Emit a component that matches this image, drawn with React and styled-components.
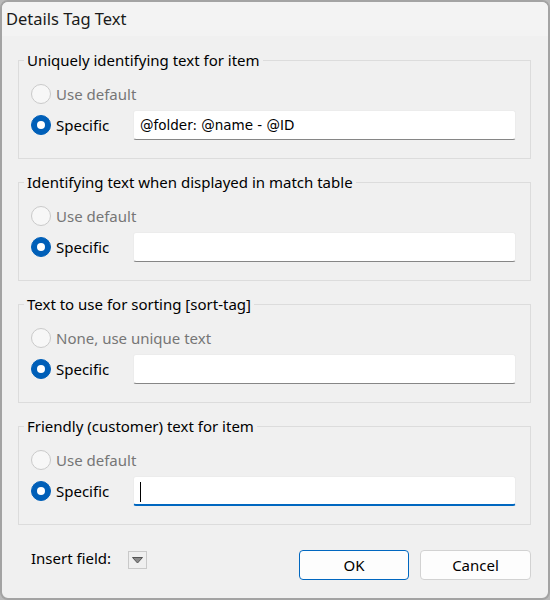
import React from "react";
import styled, { createGlobalStyle } from "styled-components";

const Global = createGlobalStyle`
  html, body { margin: 0; padding: 0; background: #b9b9b9; }
  body { width: 550px; height: 600px; overflow: hidden; }
  * { box-sizing: border-box; }
`;

const Window = styled.div`
  width: 550px;
  height: 600px;
  border: 2px solid #a3a3a3;
  border-radius: 8px;
  background: #f0f0f0;
  overflow: hidden;
  display: flex;
  flex-direction: column;
  font-family: "Noto Sans", "Open Sans", sans-serif;
  color: #000;
`;

const TitleBar = styled.div`
  height: 34px;
  flex: none;
  background: #f3f3f3;
  display: flex;
  align-items: center;
  padding: 0 0 2px 4px;
  font-size: 16.5px;
  color: #1a1a1a;
`;

const Body = styled.div`
  flex: 1;
  display: flex;
  flex-direction: column;
  gap: 14px;
  padding: 15px 17px 0 16px;
`;

const Group = styled.fieldset`
  margin: 0;
  border: 1px solid #dcdcdc;
  padding: 0 14px 18px 12px;
  min-width: 0;
`;

const Legend = styled.legend`
  font-size: 15px;
  line-height: 18px;
  padding: 0 3px;
  margin-left: -7px;
  color: #000;
`;

const Rows = styled.div`
  display: flex;
  flex-direction: column;
  gap: 4px;
  padding-top: 13px;
`;

const Row = styled.div`
  display: flex;
  align-items: center;
  height: ${(p) => (p.$tall ? 30 : 24)}px;
`;

const Choice = styled.div`
  display: flex;
  align-items: center;
  gap: 5px;
  width: ${(p) => (p.$fixed ? "102px" : "auto")};
  flex: none;
  font-size: 15px;
  color: ${(p) => (p.$disabled ? "#767676" : "#000")};
`;

const Radio = styled.span`
  width: 20px;
  height: 20px;
  border-radius: 50%;
  flex: none;
  display: flex;
  align-items: center;
  justify-content: center;
  background: ${(p) => (p.$checked ? "#005fb8" : "#f7f7f7")};
  border: 1px solid ${(p) => (p.$checked ? "#005fb8" : "#cacaca")};
  &::after {
    content: "";
    display: ${(p) => (p.$checked ? "block" : "none")};
    width: 8px;
    height: 8px;
    border-radius: 50%;
    background: #fff;
  }
`;

const Field = styled.div`
  flex: 1;
  height: 30px;
  background: #fff;
  border: 1px solid #ececec;
  border-bottom: ${(p) => (p.$focused ? "2px solid #0067c0" : "1px solid #868686")};
  border-radius: 3px;
  display: flex;
  align-items: center;
  padding: 0 0 0 6px;
  font-family: "DejaVu Sans", sans-serif;
  font-size: 13.5px;
  color: #000;
  white-space: nowrap;
`;

const Caret = styled.span`
  width: 1px;
  height: 20px;
  background: #000;
  margin-top: 2px;
`;

const Footer = styled.div`
  display: flex;
  align-items: flex-start;
  margin-top: 11px;
  padding-left: 13px;
`;

const InsertLabel = styled.div`
  font-size: 15px;
  line-height: 18px;
  margin-top: -1px;
`;

const DropButton = styled.div`
  width: 19px;
  height: 18px;
  margin: 1px 0 0 17px;
  border: 1px solid #c9c9c9;
  background: #efefef;
  display: flex;
  align-items: center;
  justify-content: center;
`;

const Spacer = styled.div`
  flex: 1;
`;

const Buttons = styled.div`
  display: flex;
  gap: 11px;
`;

const Button = styled.div`
  width: ${(p) => p.$w}px;
  height: 30px;
  border-radius: 4px;
  background: #fdfdfd;
  border: 1px solid ${(p) => (p.$primary ? "#0067c0" : "#d2d2d2")};
  display: flex;
  align-items: center;
  justify-content: center;
  font-size: 15px;
  color: #000;
`;

const groups = [
  { title: "Uniquely identifying text for item", first: "Use default", value: "@folder: @name - @ID" },
  { title: "Identifying text when displayed in match table", first: "Use default", value: "" },
  { title: "Text to use for sorting [sort-tag]", first: "None, use unique text", value: "" },
  { title: "Friendly (customer) text for item", first: "Use default", value: "", focused: true },
];

export default function App() {
  return (
    <>
      <Global />
      <Window>
        <TitleBar>Details Tag Text</TitleBar>
        <Body>
          {groups.map((g) => (
            <Group key={g.title}>
              <Legend>{g.title}</Legend>
              <Rows>
                <Row>
                  <Choice $disabled>
                    <Radio />
                    {g.first}
                  </Choice>
                </Row>
                <Row $tall>
                  <Choice $fixed>
                    <Radio $checked />
                    Specific
                  </Choice>
                  <Field $focused={g.focused}>
                    {g.value}
                    {g.focused && <Caret />}
                  </Field>
                </Row>
              </Rows>
            </Group>
          ))}
          <Footer>
            <InsertLabel>Insert field:</InsertLabel>
            <DropButton>
              <svg width="11" height="7" viewBox="0 0 11 7">
                <path d="M0.5 0.5 H10.5 L5.5 6 Z" fill="#8a8a8a" stroke="#555" strokeWidth="1" strokeLinejoin="round" />
              </svg>
            </DropButton>
            <Spacer />
            <Buttons>
              <Button $primary $w={110}>OK</Button>
              <Button $w={111}>Cancel</Button>
            </Buttons>
          </Footer>
        </Body>
      </Window>
    </>
  );
}
